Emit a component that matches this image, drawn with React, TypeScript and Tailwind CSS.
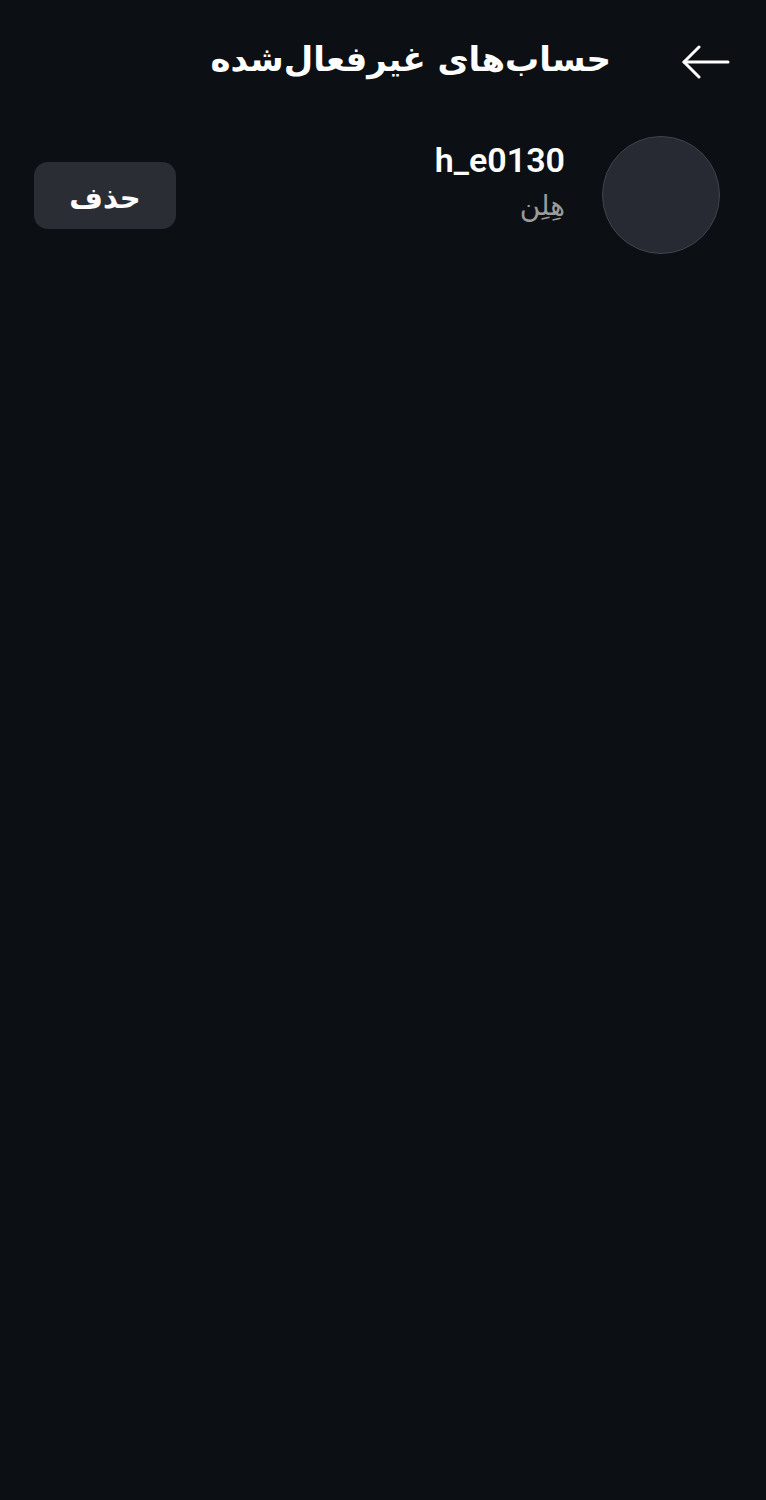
export default function App() {
  return (
    <div
      dir="rtl"
      className="min-h-[1500px] w-full bg-[#0c0f14] text-white"
      style={{ fontFamily: '"DejaVu Sans", Roboto, sans-serif' }}
    >
      {/* Header */}
      <div className="flex h-[124px] items-center pr-[36px]">
        <button className="flex h-[48px] w-[48px] items-center justify-center text-white">
          <svg width="48" height="34" viewBox="0 0 48 34" fill="none" stroke="currentColor" strokeWidth="3" strokeLinecap="round" strokeLinejoin="round">
            <path d="M46 17H2" />
            <path d="M17 2L2 17l15 15" />
          </svg>
        </button>
        <h1 className="mr-[71px] pb-[6px] text-[34px] font-bold leading-none">حساب‌های غیرفعال‌شده</h1>
      </div>

      {/* Account row */}
      <div className="flex items-center pl-[34px] pr-[46px] pt-[12px]">
        <div className="h-[118px] w-[118px] shrink-0 rounded-full border border-[#40444d] bg-[#272a32]" />
        <div className="mr-[37px] flex flex-1 flex-col items-start pb-[26px]">
          <span
            dir="ltr"
            className="text-[34px] font-semibold leading-[40px] text-white"
            style={{ fontFamily: 'Roboto, "Liberation Sans", sans-serif' }}
          >
            h_e0130
          </span>
          <span className="mt-[8px] text-[28px] leading-[36px] text-[#9b9b9b]">هِلِن</span>
        </div>
        <button className="flex h-[67px] w-[142px] items-center justify-center rounded-[14px] bg-[#2a2d34] pt-[8px] text-[29px] font-bold text-white">
          حذف
        </button>
      </div>
    </div>
  );
}
